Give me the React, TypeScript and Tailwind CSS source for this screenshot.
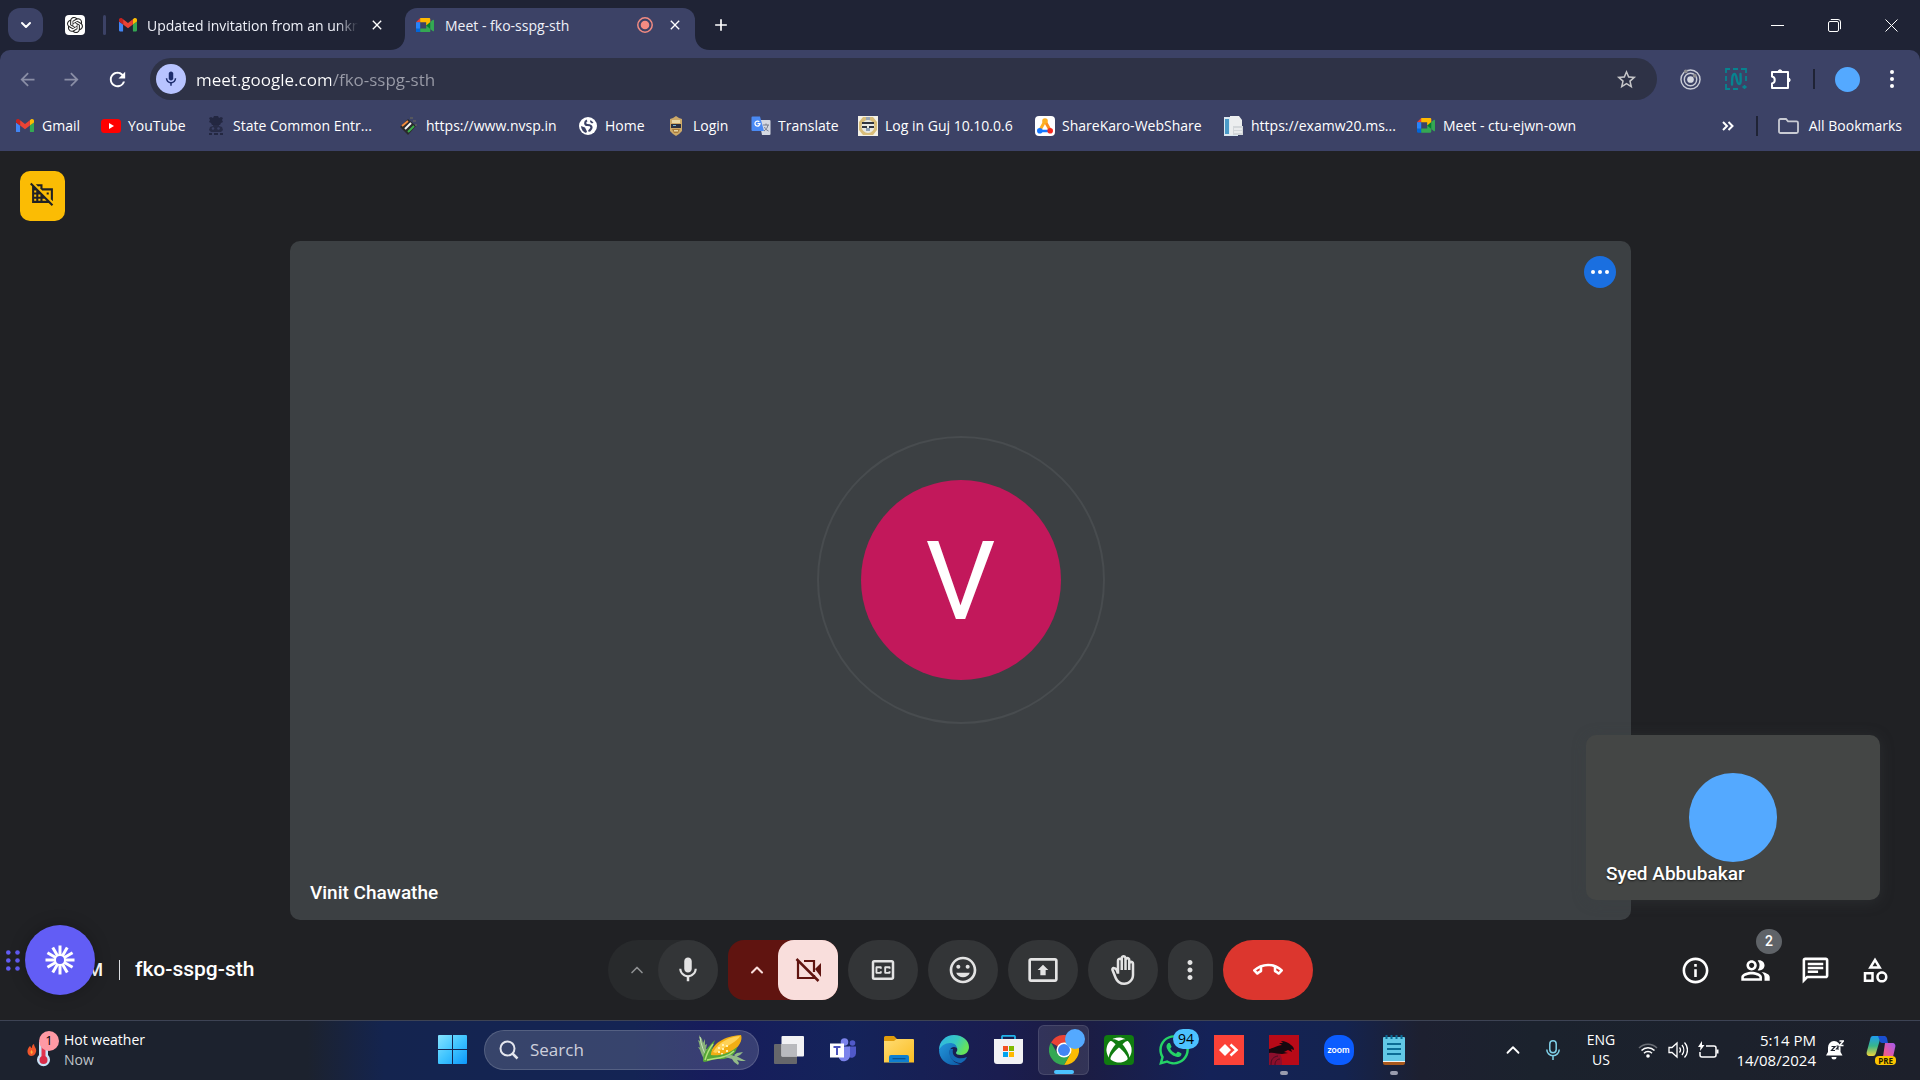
import type { ReactNode } from "react";
import {
  MdOutlineClosedCaption,
  MdOutlineMood,
  MdOutlinePresentToAll,
  MdOutlineBackHand,
  MdMoreVert,
  MdOutlineCallEnd,
  MdInfoOutline,
  MdOutlinePeopleAlt,
  MdOutlineChat,
  MdOutlineCategory,
  MdOutlineDomainDisabled,
  MdMic,
  MdOutlineMic,
  MdStarOutline,
  MdArrowBack,
  MdArrowForward,
  MdRefresh,
  MdClose,
  MdAdd,
} from "react-icons/md";
import { FaXbox, FaWhatsapp } from "react-icons/fa";
import { SiOpenai } from "react-icons/si";
import { ChevronDown, ChevronUp } from "lucide-react";

function GmailLogo() {
  return (
    <svg viewBox="52 42 88 66" className="w-[18px] shrink-0">
      <path fill="#4285f4" d="M58 108h14V74L52 59v43c0 3.32 2.69 6 6 6" />
      <path fill="#34a853" d="M120 108h14c3.32 0 6-2.69 6-6V59l-20 15" />
      <path fill="#fbbc04" d="M120 48v26l20-15v-8c0-7.42-8.47-11.65-14.4-7.2" />
      <path fill="#ea4335" d="M72 74V48l24 18 24-18v26L96 92" />
      <path fill="#c5221f" d="M52 51v8l20 15V48l-5.6-4.2c-5.94-4.45-14.4-.22-14.4 7.2" />
    </svg>
  );
}

function MeetLogo() {
  return (
    <svg viewBox="0 0 87.5 72" className="w-[18px] shrink-0">
      <path fill="#00832d" d="M49.5 36l8.53 9.75 11.47 7.33 2-17.02-2-16.64-11.69 6.44z" />
      <path fill="#0066da" d="M0 51.5V66c0 3.315 2.685 6 6 6h14.5l3-10.96-3-9.54-9.95-3z" />
      <path fill="#e94235" d="M20.5 0L0 20.5l10.55 3 9.95-3 2.95-9.41z" />
      <path fill="#2684fc" d="M20.5 20.5H0v31h20.5z" />
      <path
        fill="#34a853"
        d="M82.6 8.68L69.5 19.42v33.66l13.16 10.79c1.97 1.54 4.85.135 4.85-2.37V11c0-2.535-2.945-3.925-4.91-2.32zM49.5 36v15.5h-29V72h43c3.315 0 6-2.685 6-6V53.08z"
      />
      <path fill="#ffba00" d="M63.5 0h-43v20.5h29V36l20-16.57V6c0-3.315-2.685-6-6-6z" />
    </svg>
  );
}

function TabFlare({ flip }: { flip?: boolean }) {
  return (
    <svg viewBox="0 0 15 15" className={flip ? "w-[15px] -scale-x-100 self-end" : "w-[15px] self-end"}>
      <path fill="#3c4266" d="M15 0v15H0C9 15 15 9 15 0z" />
    </svg>
  );
}

function TabStrip() {
  return (
    <header className="flex h-[50px] items-center bg-[#1f2335] text-[14px] text-[#eef0f8]">
      <button aria-label="Search tabs" className="ml-2 flex h-[34px] w-[35px] items-center justify-center rounded-xl bg-[#3c4266] text-white">
        <ChevronDown size={16} strokeWidth={3} />
      </button>
      <button aria-label="ChatGPT" className="ml-[22px] flex h-5 w-5 items-center justify-center rounded bg-white text-[#222]">
        <SiOpenai size={16} />
      </button>
      <span className="ml-[18px] h-5 w-[3px] rounded bg-[#3c4266]" />
      <div className="ml-[13px] flex w-[271px] items-center">
        <GmailLogo />
        <span className="ml-[10px] w-[220px] whitespace-nowrap [mask-image:linear-gradient(90deg,#000_86%,transparent_96%)]">
          Updated invitation from an unkn
        </span>
        <button aria-label="Close tab" className="ml-0.5 text-white">
          <MdClose size={16} />
        </button>
      </div>
      <div className="flex self-end">
        <TabFlare />
        <div className="flex h-[42px] w-[290px] items-center rounded-t-xl bg-[#3c4266] pb-2 pl-[11px]">
          <MeetLogo />
          <span className="ml-[11px] flex-1">Meet - fko-sspg-sth</span>
          <svg viewBox="0 0 16 16" className="w-4">
            <circle cx="8" cy="8" r="7.2" fill="none" stroke="#f28b82" strokeWidth="1.5" />
            <circle cx="8" cy="8" r="4.3" fill="#f28b82" />
          </svg>
          <button aria-label="Close tab" className="mr-3 ml-[14px] text-white">
            <MdClose size={16} />
          </button>
        </div>
        <TabFlare flip />
      </div>
      <button aria-label="New tab" className="ml-px text-white">
        <MdAdd size={20} />
      </button>
      <div className="ml-auto flex text-white">
        <button aria-label="Minimize" className="flex h-[50px] w-[57px] items-center justify-center">
          <svg viewBox="0 0 13 13" className="w-[13px]"><path d="M0 6.5h13" stroke="currentColor" /></svg>
        </button>
        <button aria-label="Restore" className="flex h-[50px] w-[57px] items-center justify-center">
          <svg viewBox="0 0 13 13" className="w-[13px]" fill="none" stroke="currentColor">
            <rect x=".5" y="2.5" width="10" height="10" rx="1.5" />
            <path d="M2.8.5H10A2.5 2.5 0 0 1 12.5 3v7.2" />
          </svg>
        </button>
        <button aria-label="Close" className="flex h-[50px] w-[57px] items-center justify-center">
          <svg viewBox="0 0 13 13" className="w-[13px]"><path d="M.5.5l12 12M12.5.5l-12 12" stroke="currentColor" /></svg>
        </button>
      </div>
    </header>
  );
}

function PuzzleIcon() {
  return (
    <svg viewBox="0 0 22 22" className="w-[22px]" fill="none" stroke="currentColor" strokeWidth="2" strokeLinejoin="round">
      <path d="M2 4h16v16H2v-4.5a3.6 3.6 0 0 0 0-7z" />
      <path d="M7.8 3.5a2.3 2.3 0 0 1 4.4 0zM18.5 9.8a2.3 2.3 0 0 1 0 4.4z" fill="currentColor" strokeWidth="1" />
    </svg>
  );
}

function Dots({ className }: { className: string }) {
  return (
    <svg viewBox="0 0 4 18" className={className} fill="currentColor">
      <circle cx="2" cy="2" r="2" />
      <circle cx="2" cy="9" r="2" />
      <circle cx="2" cy="16" r="2" />
    </svg>
  );
}

function Toolbar() {
  return (
    <div className="bg-[#1f2335]">
      <div className="flex h-[58px] items-center rounded-t-[10px] bg-[#3c4266] pl-[5px] text-white">
        <button aria-label="Back" className="flex w-11 justify-center text-[#8a8ea6]"><MdArrowBack size={21} /></button>
        <button aria-label="Forward" className="flex w-11 justify-center text-[#8a8ea6]"><MdArrowForward size={21} /></button>
        <button aria-label="Reload" className="flex w-12 justify-center"><MdRefresh size={23} /></button>
        <div className="ml-[9px] flex h-[42px] flex-1 items-center rounded-full bg-[#2e3246] pr-[19px] pl-1.5">
          <button aria-label="Microphone in use" className="flex h-[30px] w-[30px] shrink-0 items-center justify-center rounded-full bg-[#b8c4ff] text-[#1c2c6c]">
            <MdOutlineMic size={18} />
          </button>
          <input
            aria-label="Address"
            defaultValue="meet.google.com/fko-sspg-sth"
            className="ml-[10px] min-w-0 flex-1 bg-[linear-gradient(90deg,#ffffff_135px,#9a9ca8_135px)] bg-clip-text pt-0.5 text-[17px] text-transparent outline-none"
          />
          <button aria-label="Bookmark this tab" className="text-[#c6c6c8]"><MdStarOutline size={23} /></button>
        </div>
        <button aria-label="Recorder extension" className="ml-[10px] flex w-[46px] justify-center">
          <svg viewBox="0 0 22 22" className="w-[21px]" fill="none" stroke="#c9ccd6">
            <circle cx="11" cy="11" r="10" strokeWidth="1.5" />
            <circle cx="11" cy="11" r="6.5" strokeWidth="1.5" />
            <circle cx="11" cy="11" r="3.5" fill="#d5d8e0" stroke="none" />
            <circle cx="6" cy="2.5" r="2" fill="#8f8f92" stroke="none" />
            <circle cx="15.5" cy="7" r="2" fill="#8f8f92" stroke="none" />
          </svg>
        </button>
        <button aria-label="Capture extension" className="flex w-[45px] justify-center">
          <svg viewBox="0 0 22 22" className="w-[22px]" fill="none" stroke="#07838f" strokeWidth="1.8">
            <path d="M1 5V1h4M8 1h5M16 1h5v4M21 8v5M1 8v5M1 16v5h4M8 21h5" />
            <path d="M19.5 17v4M17.5 19h4" />
            <path d="M7 16.5C7 12 7 6 9.500 6s2 10 4.500 10 1.500-6 1.500-10" strokeWidth="2.4" strokeLinecap="round" />
          </svg>
        </button>
        <button aria-label="Extensions" className="flex w-[45px] justify-center"><PuzzleIcon /></button>
        <span className="ml-[10px] h-5 w-0.5 bg-[#1f2335]" />
        <button aria-label="Profile" className="ml-5 h-[25px] w-[25px] rounded-full bg-[#54a9ff]" />
        <button aria-label="Menu" className="mr-4 ml-5 flex w-6 justify-center"><Dots className="h-[18px]" /></button>
      </div>
    </div>
  );
}

function YouTubeIcon() {
  return (
    <svg viewBox="0 0 20 14" className="w-5 shrink-0">
      <rect width="20" height="14" rx="3.5" fill="#f00" />
      <path d="M8 4l5 3-5 3z" fill="#fff" />
    </svg>
  );
}

function EmblemIcon() {
  return (
    <svg viewBox="0 0 20 20" className="w-5 shrink-0" fill="#232741">
      <path d="M3 2l2-1 2 1 1-2h4l1 2 2-1 2 1-1 2 1 2-2 1-1 2H6L5 7 3 6l1-2z" />
      <path d="M7 8h6v2l3 1 1 3-2 2H5l-2-2 1-3 3-1z" opacity=".85" />
      <circle cx="7" cy="12.5" r="1.3" fill="#3c4266" />
      <circle cx="12.5" cy="12.5" r="1.3" fill="#3c4266" />
      <path d="M3 17h3v2H3zM8 17h4v2H8zM14 17h3v2h-3z" />
    </svg>
  );
}

function VoterIcon() {
  return (
    <svg viewBox="0 0 20 20" className="w-5 shrink-0">
      <path d="M1 11l8-8 8 7-8 9z" fill="#2a2a2c" />
      <path d="M3 10l6-5" stroke="#f08a3c" strokeWidth="2" />
      <path d="M6 13l6-6" stroke="#f4f4f4" strokeWidth="2" />
      <path d="M9 16l6-6" stroke="#3cae4a" strokeWidth="2" />
      <path d="M11 1h3v2h-3zM14 4h3v2h-3zM16 8h2v2h-2z" fill="#55575e" />
    </svg>
  );
}

function GlobeIcon() {
  return (
    <svg viewBox="0 0 20 20" className="w-5 shrink-0">
      <circle cx="10" cy="10" r="9" fill="#fff" />
      <path
        d="M9 4.500C6.500 5.500 6.500 9 9.500 9c1.500 0 4 .5 4 2.500s-2 2-2.500 4"
        fill="none"
        stroke="#3c4266"
        strokeWidth="2.2"
      />
      <path d="M3 10l4 1.500 2 4-1 1.500C5 16 3 13 3 10z" fill="#3c4266" />
      <path d="M12.5 4l3 2.500-1.500 1-2-1.500z" fill="#3c4266" />
    </svg>
  );
}

function BadgeIcon() {
  return (
    <svg viewBox="0 0 20 20" className="w-5 shrink-0">
      <path d="M10 0l3 2 3 1v12l-3 3-3 2-3-2-3-3V3l3-1z" fill="#cda968" />
      <path d="M6 4h8v3H6z" fill="#e9d9a8" />
      <path d="M5 8h10v4H5z" fill="#2c3140" />
      <path d="M7 9h3v1H7z" fill="#6fb5d8" />
      <path d="M6 13h8l-2 4H8z" fill="#a97b39" />
      <path d="M8 14h4v1.5H8z" fill="#e9d9a8" />
    </svg>
  );
}

function TranslateIcon() {
  return (
    <svg viewBox="0 0 20 20" className="w-5 shrink-0">
      <path d="M8 4h10.5a1 1 0 0 1 1 1v13a1 1 0 0 1-1 1H11z" fill="#d5d9e2" />
      <path d="M12 9h6M15 7.5V9M17 9c-.5 3-2 4.500-4 6M13.500 11c.8 2 2 3 4 4" stroke="#747b8c" fill="none" />
      <path d="M1.5.5H9L13 15H1.500a1 1 0 0 1-1-1V1.500a1 1 0 0 1 1-1z" fill="#4a8af4" />
      <path d="M8.300 5.800A2.500 2.500 0 1 0 9 7.700H6.500" stroke="#fff" strokeWidth="1.3" fill="none" />
    </svg>
  );
}

function SealIcon() {
  return (
    <svg viewBox="0 0 20 20" className="w-5 shrink-0">
      <rect width="20" height="20" fill="#f4f1e6" />
      <path d="M5 1h10l4 5v8l-4 5H5l-4-5V6z" fill="#d9bd79" />
      <circle cx="10" cy="10.5" r="6.5" fill="#e8e8e2" />
      <path d="M8 1h4v3H8z" fill="#9aa6b4" />
      <path d="M4 6h12v2H4zM4 10h5v2H4zM11 10h5v2h-5z" fill="#30343f" />
      <path d="M8 12h4v3H8z" fill="#8ea0b5" />
    </svg>
  );
}

function ShareKaroIcon() {
  return (
    <svg viewBox="0 0 20 20" className="w-5 shrink-0">
      <rect width="20" height="20" rx="4" fill="#fff" />
      <path d="M10 5L5 14" stroke="#fdb022" strokeWidth="3" />
      <path d="M10 5l5 9" stroke="#fb8c1e" strokeWidth="3" />
      <path d="M5 15h10" stroke="#1677ff" strokeWidth="2.5" />
      <circle cx="10" cy="5" r="2.8" fill="#fdb022" />
      <circle cx="4.8" cy="14.8" r="2.8" fill="#1677ff" />
      <circle cx="15.2" cy="14.8" r="2.8" fill="#f5281e" />
    </svg>
  );
}

function ServerPageIcon() {
  return (
    <svg viewBox="0 0 20 20" className="w-5 shrink-0">
      <path d="M0 1h14v19H0z" fill="#dbe9f2" />
      <path d="M1 3h4v15H1z" fill="#4a9ac7" />
      <path d="M6 0h9l3 4v15H6z" fill="#eceeef" />
      <path d="M9 10h10v9H9z" fill="#d3d7da" />
      <path d="M10 13h8M10 16h8" stroke="#fff" />
    </svg>
  );
}

const bookmarks: { label: string; icon: ReactNode; width: string }[] = [
  { label: "Gmail", icon: <GmailLogo />, width: "w-[86px]" },
  { label: "YouTube", icon: <YouTubeIcon />, width: "w-[105px]" },
  { label: "State Common Entr...", icon: <EmblemIcon />, width: "w-[193px]" },
  { label: "https://www.nvsp.in", icon: <VoterIcon />, width: "w-[179px]" },
  { label: "Home", icon: <GlobeIcon />, width: "w-[88px]" },
  { label: "Login", icon: <BadgeIcon />, width: "w-[85px]" },
  { label: "Translate", icon: <TranslateIcon />, width: "w-[107px]" },
  { label: "Log in Guj 10.10.0.6", icon: <SealIcon />, width: "w-[177px]" },
  { label: "ShareKaro-WebShare", icon: <ShareKaroIcon />, width: "w-[189px]" },
  { label: "https://examw20.ms...", icon: <ServerPageIcon />, width: "w-[192px]" },
  { label: "Meet - ctu-ejwn-own", icon: <MeetLogo />, width: "w-[180px]" },
];

function BookmarkBar() {
  return (
    <nav className="flex h-[43px] items-center bg-[#3c4266] pb-2 pl-[15px] text-[14px] whitespace-nowrap text-white">
      {bookmarks.map((b) => (
        <a key={b.label} href="#" className={`${b.width} flex h-full shrink-0 items-center`}>
          <span className="mr-[7px] flex w-5 justify-center">{b.icon}</span>
          {b.label}
        </a>
      ))}
      <button aria-label="More bookmarks" className="mr-[22px] ml-auto">
        <svg viewBox="0 0 12 10" className="w-3" fill="none" stroke="currentColor" strokeWidth="2">
          <path d="M1 1l4 4-4 4M6.5 1l4 4-4 4" />
        </svg>
      </button>
      <span className="mr-5 h-5 w-0.5 bg-[#1f2335]" />
      <a href="#" className="mr-[18px] flex items-center gap-[10px]">
        <svg viewBox="0 0 21 16" className="w-[21px]" fill="none" stroke="#c9cbd3" strokeWidth="1.8">
          <path d="M1 13.500v-11A1.500 1.500 0 0 1 2.500 1H8l2 2.300h8.500A1.500 1.500 0 0 1 20 4.800v8.700a1.500 1.500 0 0 1-1.500 1.500h-16A1.500 1.500 0 0 1 1 13.500z" />
        </svg>
        All Bookmarks
      </a>
    </nav>
  );
}

function CameraOffIcon() {
  return (
    <svg viewBox="0 0 26 26" className="w-[26px]" fill="none" stroke="#601410" strokeWidth="2.2">
      <path d="M3 4v17h16v-3" />
      <path d="M9 4h10v11" />
      <path d="M20 12l6-6v14z" fill="#601410" stroke="none" />
      <path d="M1.5 2l22 22" strokeWidth="2.5" />
    </svg>
  );
}

function SparkIcon() {
  return (
    <svg viewBox="-15 -15 30 30" className="w-[30px]">
      {[0, 30, 60, 90, 120, 150, 180, 210, 240, 270, 300, 330].map((a) => (
        <path key={a} d="M0 -5v-9.5" stroke="#fff" strokeWidth="3" transform={`rotate(${a})`} />
      ))}
      <circle r="5" fill="none" stroke="#fff" strokeWidth="2" />
    </svg>
  );
}

function RoundButton({ label, children }: { label: string; children: ReactNode }) {
  return (
    <button aria-label={label} className="flex h-[60px] w-[70px] items-center justify-center rounded-full bg-[#333537] text-[#e3e3e3]">
      {children}
    </button>
  );
}

function CallControls() {
  return (
    <div className="flex gap-[10px]">
      <div className="flex rounded-full bg-[#282a2c]">
        <button aria-label="Audio settings" className="flex h-[60px] w-[50px] items-center justify-center pl-2 text-[#8e9092]">
          <ChevronUp size={20} strokeWidth={2} />
        </button>
        <button aria-label="Turn off microphone" className="flex h-[60px] w-[60px] items-center justify-center rounded-full bg-[#333537] text-[#e3e3e3]">
          <MdMic size={30} />
        </button>
      </div>
      <div className="flex rounded-2xl bg-[#601410]">
        <button aria-label="Video settings" className="flex h-[60px] w-[50px] items-center justify-center pl-2 text-[#f9dedc]">
          <ChevronUp size={20} strokeWidth={2.5} />
        </button>
        <button aria-label="Turn on camera" className="flex h-[60px] w-[60px] items-center justify-center rounded-2xl bg-[#f9dedc]">
          <CameraOffIcon />
        </button>
      </div>
      <RoundButton label="Captions"><MdOutlineClosedCaption size={30} /></RoundButton>
      <RoundButton label="Send a reaction"><MdOutlineMood size={32} /></RoundButton>
      <RoundButton label="Present now"><MdOutlinePresentToAll size={32} /></RoundButton>
      <RoundButton label="Raise hand"><MdOutlineBackHand size={30} /></RoundButton>
      <button aria-label="More options" className="flex h-[60px] w-[45px] items-center justify-center rounded-full bg-[#333537] text-[#e3e3e3]">
        <MdMoreVert size={30} />
      </button>
      <button aria-label="Leave call" className="flex h-[60px] w-[90px] items-center justify-center rounded-full bg-[#dc362e] text-white">
        <MdOutlineCallEnd size={30} />
      </button>
    </div>
  );
}

function Meeting() {
  return (
    <main className="relative flex flex-1 flex-col bg-[#202124] font-['Roboto',sans-serif] text-white">
      <button aria-label="Not shared outside organization" className="absolute top-5 left-5 flex h-[50px] w-[45px] justify-center rounded-[10px] bg-[#fbbc04] pt-2.5 text-[#202124]">
        <MdOutlineDomainDisabled size={25} />
      </button>
      <section className="flex flex-1 pt-[90px] pr-[289px] pl-[290px]">
        <div className="relative flex flex-1 items-center justify-center rounded-[10px] bg-[#3c4043] pb-0.5">
          <div className="flex h-72 w-72 items-center justify-center rounded-full border-2 border-[#484c4f]">
            <div className="flex h-[200px] w-[200px] items-center justify-center rounded-full bg-[#c2185b] pt-1 text-[110px] leading-none">V</div>
          </div>
          <button aria-label="Tile options" className="absolute top-[15px] right-[15px] flex h-8 w-8 items-center justify-center rounded-full bg-[#1a6fe0]">
            <Dots className="h-[18px] rotate-90" />
          </button>
          <span className="absolute bottom-[15px] left-5 text-[19px] leading-6 font-medium">Vinit Chawathe</span>
        </div>
      </section>
      <div className="absolute right-10 bottom-[120px] flex h-[165px] w-[294px] items-center justify-center rounded-[10px] bg-[#444645] shadow-[0_2px_14px_rgba(60,64,67,0.4)]">
        <div className="h-[89px] w-[88px] rounded-full bg-[#54a9ff]" />
        <span className="absolute bottom-3.5 left-5 text-[19px] leading-6 font-medium [text-shadow:0_1px_2px_rgba(0,0,0,0.6)]">Syed Abbubakar</span>
      </div>
      <footer className="grid h-[100px] grid-cols-[1fr_auto_1fr] items-center">
        <div className="flex items-center font-medium">
          <span className="w-[103px] text-right text-[19px]">5:14 PM</span>
          <span className="ml-4 h-5 w-px bg-[#dadce0]" />
          <span className="ml-[15px] text-[21px]">fko-sspg-sth</span>
        </div>
        <CallControls />
        <div className="flex justify-end pr-[15px]">
          <button aria-label="Meeting details" className="flex h-[60px] w-[60px] items-center justify-center"><MdInfoOutline size={31} /></button>
          <button aria-label="People" className="relative flex h-[60px] w-[60px] items-center justify-center">
            <MdOutlinePeopleAlt size={31} />
            <span className="absolute -top-[11px] right-[3px] flex h-[25px] w-[26px] items-center justify-center rounded-full bg-[#5f6368] text-[14px] font-medium">2</span>
          </button>
          <button aria-label="Chat" className="flex h-[60px] w-[60px] items-center justify-center"><MdOutlineChat size={31} /></button>
          <button aria-label="Activities" className="flex h-[60px] w-[60px] items-center justify-center"><MdOutlineCategory size={30} /></button>
        </div>
      </footer>
      <div className="absolute bottom-[25px] left-1.5 flex items-center gap-[5px]">
        <svg viewBox="0 0 14 21" className="w-[14px]" fill="#625df5">
          <circle cx="2.3" cy="2.5" r="2.3" /><circle cx="11.5" cy="2.5" r="2.3" />
          <circle cx="2.3" cy="10.5" r="2.3" /><circle cx="11.5" cy="10.5" r="2.3" />
          <circle cx="2.3" cy="18.5" r="2.3" /><circle cx="11.5" cy="18.5" r="2.3" />
        </svg>
        <button aria-label="Record screen" className="flex h-[70px] w-[70px] items-center justify-center rounded-full bg-[#625df5] shadow-[0_0_16px_rgba(0,0,0,0.25)]">
          <SparkIcon />
        </button>
      </div>
    </main>
  );
}

function WindowsIcon() {
  return (
    <svg viewBox="0 0 29 29" className="w-[29px]">
      <linearGradient id="win" x1="0" y1="0" x2="1" y2="1">
        <stop offset="0" stopColor="#86e3ff" /><stop offset=".5" stopColor="#3fc4ff" /><stop offset="1" stopColor="#0c97fb" />
      </linearGradient>
      <path fill="url(#win)" d="M1 0h13v14H0V1a1 1 0 0 1 1-1zM15 0h13a1 1 0 0 1 1 1v13H15zM0 15h14v14H1a1 1 0 0 1-1-1zM15 15h14v13a1 1 0 0 1-1 1H15z" />
    </svg>
  );
}

function CornIcon() {
  return (
    <svg viewBox="0 0 48 31" className="h-[31px] w-12 shrink-0">
      <path d="M7 27C4 22 3 19 2 16l-2-3 2 .5L1 9 0 6l2 1L1 1l3 4 1 4 2-4 0 6 2-1-1 5 2 0-1 4 0 4z" fill="#86b078" />
      <path d="M2 3c1 8 4 15 7 21" stroke="#c9e0bb" fill="none" />
      <path d="M12 21C14 10 26 2 43 1c2 5-2 12-9 17-7 5-15 6-20 5z" fill="#f2ae14" />
      <path d="M15 18C21 8 31 3 42 2c-3 6-14 10-24 17z" fill="#ffd257" />
      <path d="M20 18h2M24 15h2M28 17h2M23 20h2M28 12h2M20 14h2M24 11h2" stroke="#fff0b0" strokeWidth="2" />
      <path d="M5 27c0-9 4-13 12-21-2 6-4 12-4 15 8 1 18-1 26-8-1 8-9 13-19 12-6 0-10 3-14 3z" fill="#55a637" />
      <path d="M7 26c2-7 4-11 8-16M9 26c9-2 20-2 27-9" stroke="#b3e07a" strokeWidth="1.5" fill="none" />
      <path d="M28 22l5-1 7 2 2 1 6 3-5 0-4-1 2 3-1 2-4-3-2-3-7-2zM36 21l3-2 6-1-3 3-4 2z" fill="#93ba88" />
    </svg>
  );
}

function TaskViewIcon() {
  return (
    <svg viewBox="0 0 30 28" className="w-[30px]">
      <rect y="8" width="23" height="20" rx="1" fill="#66676b" />
      <rect x="7.5" width="22.5" height="20.5" rx="1" fill="#f2f2f4" />
      <rect x="7.5" y="8" width="15.5" height="12.5" fill="#b9babe" />
    </svg>
  );
}

function TeamsIcon() {
  return (
    <svg viewBox="0 0 27 24" className="w-[27px]">
      <circle cx="22.5" cy="5" r="2.8" fill="#5059c9" />
      <path d="M19 8.5h7v7a4.5 4.5 0 0 1-7 3.5z" fill="#5059c9" />
      <circle cx="14.5" cy="4" r="3.8" fill="#7b83eb" />
      <path d="M9 8.5h11v9a6 6 0 0 1-11 3z" fill="#7b83eb" />
      <rect y="5.5" width="14" height="14" fill="#fff" />
      <path d="M3.5 9h7M7 9v8" stroke="#4b53bc" strokeWidth="2" />
    </svg>
  );
}

function ExplorerIcon() {
  return (
    <svg viewBox="0 0 30 27" className="w-[30px]">
      <linearGradient id="fold" x1="0" y1="0" x2="1" y2="1">
        <stop offset="0" stopColor="#ffdc73" /><stop offset="1" stopColor="#fbbd22" />
      </linearGradient>
      <path d="M0 1.5A1.5 1.5 0 0 1 1.5 0H10l3 3v5H0z" fill="#e09c0c" />
      <path d="M0 5h10l2.5-2H29a1 1 0 0 1 1 1v22.5H0z" fill="url(#fold)" />
      <path d="M5 26.5V21a2 2 0 0 1 2-2h16a2 2 0 0 1 2 2v5.5z" fill="#0f7fd0" />
      <path d="M8.5 22.7h13" stroke="#0a4f8c" strokeWidth="1.2" />
    </svg>
  );
}

function EdgeIcon() {
  return (
    <svg viewBox="0 0 30 30" className="w-[30px]">
      <linearGradient id="edgeTop" x1="0" y1="0" x2="1" y2=".4">
        <stop offset="0" stopColor="#2fb2ea" /><stop offset=".6" stopColor="#37c9c0" /><stop offset="1" stopColor="#66e35a" />
      </linearGradient>
      <linearGradient id="edgeLow" x1="0" y1="0" x2="1" y2="1">
        <stop offset="0" stopColor="#2397dc" /><stop offset="1" stopColor="#0c59a4" />
      </linearGradient>
      <path d="M0 15C0 6 7 0 15 0c9 0 15 6 15 12 0 5-4 8-8 8-3 0-5-1-5-2s2-2 1-5c-1-2-4-3-7-3C6 10 2 12 0 15z" fill="url(#edgeTop)" />
      <path d="M0 15c2-4 6-7 11-7 4 0 7 2 7 6 0-1-1-2-3-2-4 0-5 4-4 8 1 5 6 9 11 9-2 1-5 1-7 1C6 30 0 23 0 15z" fill="url(#edgeLow)" />
      <path d="M11 14c-3 7 3 14 11 14 2-1 5-3 6-6-7 3-16 1-14-8z" fill="#1468b4" />
    </svg>
  );
}

function StoreIcon() {
  return (
    <svg viewBox="0 0 29 29" className="w-[29px]">
      <path d="M8 5V1.8A1 1 0 0 1 9 .8h11a1 1 0 0 1 1 1V5" fill="none" stroke="#22b3ea" strokeWidth="1.8" />
      <path d="M0 4h29v22a3 3 0 0 1-3 3H3a3 3 0 0 1-3-3z" fill="#f2f2f4" />
      <path d="M9 11h5v5H9z" fill="#f25022" /><path d="M15 11h5v5h-5z" fill="#7fba00" />
      <path d="M9 17h5v5H9z" fill="#00a4ef" /><path d="M15 17h5v5h-5z" fill="#ffb900" />
    </svg>
  );
}

function ChromeIcon() {
  return (
    <svg viewBox="0 0 30 30" className="w-[30px]">
      <path d="M15 15L2 7.5A15 15 0 0 1 28 7.5z" fill="#ea4335" />
      <path d="M15 7.5H28A15 15 0 0 1 15 30l6.5-11.5z" fill="#fbbc04" />
      <path d="M2 7.5A15 15 0 0 0 15 30l6.5-11.3L8.5 18.7z" fill="#34a853" />
      <circle cx="15" cy="15" r="7.5" fill="#fff" />
      <circle cx="15" cy="15" r="6" fill="#4285f4" />
    </svg>
  );
}

function DragonIcon() {
  return (
    <svg viewBox="0 0 30 30" className="w-[30px]">
      <rect width="30" height="30" fill="#b80a18" />
      <path d="M0 17c6 0 9 0 11 2 2 3 2 7 2 11H0z" fill="#8c0f2c" />
      <path d="M0 14c5-1 9-4 13-4l-3-2 4 0-2-2c4 0 8 2 10 4 1 1 3 2 3 5l-3-1 1 3-4-2-4 2 4 1-6 1c-5 0-8-2-13-1z" fill="#16080f" />
      <path d="M2 30c0-6 2-8 7-9M6 30c0-4 2-6 5-6" stroke="#4a0c22" fill="none" />
    </svg>
  );
}

function NotepadIcon() {
  return (
    <svg viewBox="0 0 22 30" className="w-[22px]">
      <path d="M0 24h22v4a2 2 0 0 1-2 2H2a2 2 0 0 1-2-2z" fill="#a8581c" />
      <path d="M0 24h22v3H0z" fill="#f2f2f2" />
      <path d="M0 3a1 1 0 0 1 1-1h20a1 1 0 0 1 1 1v23H0z" fill="#62c8e6" />
      <path d="M4 9h14M4 14h14M4 19h14" stroke="#0b6c95" strokeWidth="2" />
      <path d="M3.5 0v4M8.5 0v4M13.5 0v4M18.5 0v4" stroke="#0b6c95" strokeWidth="2" />
    </svg>
  );
}

function CopilotIcon() {
  return (
    <svg viewBox="0 0 30 28" className="w-[30px]">
      <linearGradient id="cpA" x1="0" y1="0" x2="0" y2="1">
        <stop offset="0" stopColor="#1e9df0" /><stop offset=".5" stopColor="#38b58a" /><stop offset="1" stopColor="#f0d43a" />
      </linearGradient>
      <linearGradient id="cpB" x1="0" y1="1" x2="1" y2="0">
        <stop offset="0" stopColor="#f5743c" /><stop offset=".5" stopColor="#ea5a9c" /><stop offset="1" stopColor="#a35af0" />
      </linearGradient>
      <path d="M7 0h11c-3 1-4 3-5 7l-3 10c-1 3-2 3-4 3H4c-3 0-4-2-3-5L4 4c.5-2.5 1-4 3-4z" fill="url(#cpA)" />
      <path d="M12 0h6c3 0 3 2 4 7h-5c-3 0-3-1-3.500-3z" fill="#1a4fd0" />
      <path d="M19 7h7c3 0 4 2 3 5l-2 9c-1 5-3 7-6 7h-8c3-1 3-3 4-7z" fill="url(#cpB)" />
    </svg>
  );
}

function TaskbarApp({ label, children, active, open }: { label: string; children: ReactNode; active?: boolean; open?: boolean }) {
  return (
    <button
      aria-label={label}
      className={
        active
          ? "relative mx-[2px] flex h-[50px] w-[51px] items-center justify-center rounded-md border border-white/10 bg-white/10"
          : "relative flex h-[50px] w-[55px] items-center justify-center"
      }
    >
      {children}
      {active && <span className="absolute bottom-0 h-1 w-5 rounded-full bg-[#4cc2ff]" />}
      {open && <span className="absolute bottom-0 h-1 w-2 rounded-full bg-[#9a9cae]" />}
    </button>
  );
}

function Taskbar() {
  return (
    <footer className="flex h-[60px] shrink-0 items-center border-t border-[#3d4354] bg-[linear-gradient(90deg,#1c222e_0%,#1c222e_16%,#14244f_20%,#142454_33%,#171c5c_37%,#14235a_44%,#1a1d50_52%,#1c1c42_56%,#142258_63%,#14234f_70%,#1d2030_74%,#1b222d_80%,#1d202b_100%)] pb-0.5 text-[15px] text-white">
      <button className="flex w-[425px] items-center pl-[27px] text-left">
        <span className="relative h-9 w-8">
          <svg viewBox="0 0 32 36" className="w-8">
            <path d="M4 24c-4-1-5-6-1-10 1 1 1 2 2 2 0-2 0-3 2-4 0 3 3 4 2 8-1 3-3 4-5 4z" fill="#f0562c" />
            <path d="M4.5 22c-1.5-1-1-3 0-4 1 1 2 3 0 4z" fill="#ffb13c" />
            <path d="M12 10h9v13a6.5 6.5 0 1 1-9 0z" fill="#c9e4f8" />
            <path d="M14.5 12h4v14h-4z" fill="#e0344e" />
            <circle cx="16.5" cy="28" r="4" fill="#d92c48" />
          </svg>
          <span className="absolute -top-px right-0 flex h-5 w-5 items-center justify-center rounded-full bg-[#ff99a4] text-[13px] text-black">1</span>
        </span>
        <span className="ml-[5px] text-[14px] leading-5">
          <span className="block">Hot weather</span>
          <span className="block text-[#bfc2c8]">Now</span>
        </span>
      </button>
      <TaskbarApp label="Start"><WindowsIcon /></TaskbarApp>
      <label className="mr-0.5 ml-1 flex h-10 w-[275px] items-center rounded-full border border-white/15 bg-white/15 pr-3 pl-3.5">
        <svg viewBox="0 0 20 20" className="w-5 shrink-0" fill="none" stroke="#e4e6ee" strokeWidth="2">
          <circle cx="8.5" cy="8.5" r="7" /><path d="M13.5 13.5l5 5" strokeWidth="2.5" />
        </svg>
        <input aria-label="Search" placeholder="Search" className="ml-[11px] min-w-0 flex-1 bg-transparent text-[17px] outline-none placeholder:text-[#ced0dc]" />
        <CornIcon />
      </label>
      <TaskbarApp label="Task view"><TaskViewIcon /></TaskbarApp>
      <TaskbarApp label="Teams"><TeamsIcon /></TaskbarApp>
      <TaskbarApp label="File Explorer"><ExplorerIcon /></TaskbarApp>
      <TaskbarApp label="Edge"><EdgeIcon /></TaskbarApp>
      <TaskbarApp label="Store"><StoreIcon /></TaskbarApp>
      <TaskbarApp label="Chrome" active>
        <ChromeIcon />
        <span className="absolute top-[3px] right-[3px] h-5 w-5 rounded-full bg-[#54a9ff]" />
      </TaskbarApp>
      <TaskbarApp label="Xbox">
        <span className="flex h-[30px] w-[30px] items-center justify-center rounded-sm bg-[#107c10]"><FaXbox size={26} /></span>
      </TaskbarApp>
      <TaskbarApp label="WhatsApp">
        <FaWhatsapp size={34} color="#25d366" />
        <span className="absolute top-1 right-0.5 flex h-5 w-[26px] items-center justify-center rounded-full bg-[#4cc2ff] text-[14px] text-black">94</span>
      </TaskbarApp>
      <TaskbarApp label="AnyDesk">
        <svg viewBox="0 0 30 30" className="w-[30px]">
          <rect width="30" height="30" fill="#fb4238" />
          <path d="M11 9l6 6-6 6-6-6z" fill="#fff" />
          <path d="M16.5 9.5L22.5 15l-6 5.5" fill="none" stroke="#fff" strokeWidth="2.5" />
        </svg>
      </TaskbarApp>
      <TaskbarApp label="Dragon" open><DragonIcon /></TaskbarApp>
      <TaskbarApp label="Zoom">
        <span className="flex h-[30px] w-[30px] items-center justify-center rounded-[13px] bg-[#0b5cff] font-['Lato',sans-serif] text-[9px] font-bold">zoom</span>
      </TaskbarApp>
      <TaskbarApp label="Notepad" open><NotepadIcon /></TaskbarApp>
      <div className="ml-auto flex items-center pr-3 text-[14px] leading-5">
        <button aria-label="Hidden icons" className="flex w-9 justify-center"><ChevronUp size={22} strokeWidth={2} /></button>
        <button aria-label="Microphone" className="flex w-11 justify-center">
          <svg viewBox="0 0 14 20" className="w-[14px]" fill="none" stroke="#7fd0e8" strokeWidth="1.5">
            <rect x="3.8" y=".8" width="6.4" height="12" rx="3.2" />
            <path d="M.8 9.5a6.2 6.2 0 0 0 12.4 0M7 16v4" />
          </svg>
        </button>
        <button className="w-[52px] text-center">ENG<br />US</button>
        <button aria-label="Network, volume and battery" className="flex w-[100px] items-center gap-[10px] pl-[11px]">
          <svg viewBox="0 0 20 16" className="w-5" fill="none" stroke="currentColor" strokeWidth="1.5">
            <path d="M1 6a12.5 12.5 0 0 1 18 0" opacity=".35" />
            <path d="M3.5 8.5a9 9 0 0 1 13 0M6 11.2a5.5 5.5 0 0 1 8 0" />
            <circle cx="10" cy="14" r="1.8" fill="currentColor" stroke="none" />
          </svg>
          <svg viewBox="0 0 20 18" className="w-5" fill="none" stroke="currentColor" strokeWidth="1.3">
            <path d="M1 6.5h3L9 2v14l-5-4.5H1z" />
            <path d="M11.5 6.5a4 4 0 0 1 0 5M14 4a8 8 0 0 1 0 10M16.5 1.5a11 11 0 0 1 0 15" />
          </svg>
          <svg viewBox="0 0 21 18" className="w-[21px]" fill="none" stroke="currentColor" strokeWidth="1.5">
            <path d="M8 5h8a2 2 0 0 1 2 2v7a2 2 0 0 1-2 2H4a2 2 0 0 1-2-2v-3" />
            <path d="M19.5 8.5v4" strokeWidth="2" />
            <path d="M4 0L0 6h2.5L2 10l4.5-6H4z" fill="currentColor" stroke="none" />
          </svg>
        </button>
        <button className="w-[89px] text-right text-[15px] leading-5">5:14 PM<br />14/08/2024</button>
        <button aria-label="Notifications" className="flex w-[38px] justify-center">
          <svg viewBox="0 0 18 20" className="w-[18px]">
            <path d="M8 1a6.5 6.5 0 0 1 6.5 6.5V12l2 3.5H0L2 12V7.5A6.5 6.5 0 0 1 8 1zM5.5 17h5a2.5 2.5 0 0 1-5 0z" fill="#fff" />
            <path d="M5.5 6.5H9l-3.5 4H9M10.5 6H13l-2.5 3H13" stroke="#1d222d" fill="none" strokeWidth="1.2" />
            <path d="M13.5 1h4l-4 4.5h4" stroke="#fff" fill="none" strokeWidth="1.5" />
          </svg>
        </button>
        <button aria-label="Copilot" className="relative flex w-[54px] justify-center">
          <CopilotIcon />
          <span className="absolute right-3 -bottom-px rounded-sm bg-[#fcc400] px-[3px] text-[8px] leading-[9px] font-bold text-[#201a00]">PRE</span>
        </button>
      </div>
    </footer>
  );
}

export default function App() {
  return (
    <div className="flex min-h-screen flex-col overflow-x-hidden font-['Open_Sans','Noto_Sans',sans-serif]">
      <TabStrip />
      <Toolbar />
      <BookmarkBar />
      <Meeting />
      <Taskbar />
    </div>
  );
}
